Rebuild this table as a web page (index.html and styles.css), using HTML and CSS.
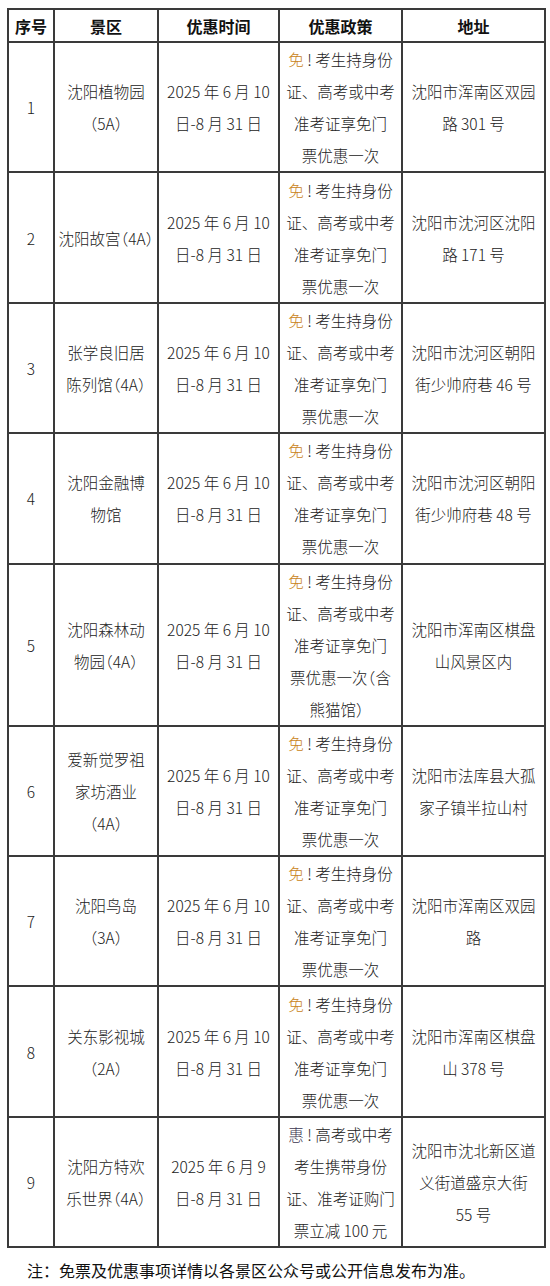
FILE: index.html
```html
<!DOCTYPE html>
<html lang="zh-CN">
<head>
<meta charset="utf-8">
<title>沈阳景区考生优惠</title>
<link rel="stylesheet" href="styles.css">
</head>
<body>
<div class="page">
<table class="offers">
  <colgroup>
    <col class="c-no"><col class="c-name"><col class="c-date"><col class="c-policy"><col class="c-addr">
  </colgroup>
  <thead>
    <tr class="head"><th>序号</th><th>景区</th><th>优惠时间</th><th>优惠政策</th><th>地址</th></tr>
  </thead>
  <tbody>
    <tr class="row">
      <td>1</td>
      <td class="name">沈阳植物园<br>（5A）</td>
      <td>2025 年 6 月 10<br>日-8 月 31 日</td>
      <td><span class="free">免</span> ! 考生持身份<br>证、高考或中考<br>准考证享免门<br>票优惠一次</td>
      <td>沈阳市浑南区双园<br>路 301 号</td>
    </tr>
    <tr class="row">
      <td>2</td>
      <td class="name">沈阳故宫（4A）</td>
      <td>2025 年 6 月 10<br>日-8 月 31 日</td>
      <td><span class="free">免</span> ! 考生持身份<br>证、高考或中考<br>准考证享免门<br>票优惠一次</td>
      <td>沈阳市沈河区沈阳<br>路 171 号</td>
    </tr>
    <tr class="row">
      <td>3</td>
      <td class="name">张学良旧居<br>陈列馆（4A）</td>
      <td>2025 年 6 月 10<br>日-8 月 31 日</td>
      <td><span class="free">免</span> ! 考生持身份<br>证、高考或中考<br>准考证享免门<br>票优惠一次</td>
      <td>沈阳市沈河区朝阳<br>街少帅府巷 46 号</td>
    </tr>
    <tr class="row">
      <td>4</td>
      <td class="name">沈阳金融博<br>物馆</td>
      <td>2025 年 6 月 10<br>日-8 月 31 日</td>
      <td><span class="free">免</span> ! 考生持身份<br>证、高考或中考<br>准考证享免门<br>票优惠一次</td>
      <td>沈阳市沈河区朝阳<br>街少帅府巷 48 号</td>
    </tr>
    <tr class="row tall">
      <td>5</td>
      <td class="name">沈阳森林动<br>物园（4A）</td>
      <td>2025 年 6 月 10<br>日-8 月 31 日</td>
      <td><span class="free">免</span> ! 考生持身份<br>证、高考或中考<br>准考证享免门<br>票优惠一次<span class="paren">（</span>含<br>熊猫馆）</td>
      <td>沈阳市浑南区棋盘<br>山风景区内</td>
    </tr>
    <tr class="row">
      <td>6</td>
      <td class="name">爱新觉罗祖<br>家坊酒业<br>（4A）</td>
      <td>2025 年 6 月 10<br>日-8 月 31 日</td>
      <td><span class="free">免</span> ! 考生持身份<br>证、高考或中考<br>准考证享免门<br>票优惠一次</td>
      <td>沈阳市法库县大孤<br>家子镇半拉山村</td>
    </tr>
    <tr class="row">
      <td>7</td>
      <td class="name">沈阳鸟岛<br>（3A）</td>
      <td>2025 年 6 月 10<br>日-8 月 31 日</td>
      <td><span class="free">免</span> ! 考生持身份<br>证、高考或中考<br>准考证享免门<br>票优惠一次</td>
      <td>沈阳市浑南区双园<br>路</td>
    </tr>
    <tr class="row">
      <td>8</td>
      <td class="name">关东影视城<br>（2A）</td>
      <td>2025 年 6 月 10<br>日-8 月 31 日</td>
      <td><span class="free">免</span> ! 考生持身份<br>证、高考或中考<br>准考证享免门<br>票优惠一次</td>
      <td>沈阳市浑南区棋盘<br>山 378 号</td>
    </tr>
    <tr class="row">
      <td>9</td>
      <td class="name">沈阳方特欢<br>乐世界（4A）</td>
      <td>2025 年 6 月 9<br>日-8 月 31 日</td>
      <td><span class="deal">惠</span> ! 高考或中考<br>考生携带身份<br>证、准考证购门<br>票立减 100 元</td>
      <td>沈阳市沈北新区道<br>义街道盛京大街<br>55 号</td>
    </tr>
  </tbody>
</table>
<p class="note">注：免票及优惠事项详情以各景区公众号或公开信息发布为准。</p>
</div>
</body>
</html>
```
FILE: styles.css
```css
html, body {
  margin: 0;
  padding: 0;
  background: #ffffff;
}

.page {
  padding: 8px 0 0 7px;
  font-family: "Noto Sans CJK SC", "Noto Sans", sans-serif;
  color: #1e1e1e;
}

.offers {
  border-collapse: collapse;
  table-layout: fixed;
  width: 537px;
}

.c-no { width: 46px; }
.c-name { width: 104px; }
.c-date { width: 121px; }
.c-policy { width: 123px; }
.c-addr { width: 143px; }

.offers th,
.offers td {
  border: 2px solid #3a3a3a;
  text-align: center;
  vertical-align: middle;
  padding: 0 2px;
  font-size: 15.5px;
  line-height: 32px;
  white-space: nowrap;
  overflow: hidden;
}

.offers th {
  font-weight: 700;
  font-size: 16px;
  color: #111;
  line-height: 20px;
}

.head { height: 33px; }
.row { height: 130.4px; }
.row.tall { height: 161px; }

.offers td {
  font-weight: 300;
  color: #222;
}

.offers td.name {
  font-feature-settings: "halt";
}

.paren {
  font-feature-settings: "halt";
}

.free {
  color: #c98318;
}

.deal {
  color: #3b3550;
}

.note {
  margin: 10px 0 0 20px;
  font-size: 16px;
  line-height: 24px;
  color: #111;
  font-family: "Noto Sans CJK SC", "Noto Sans", sans-serif;
}
```
